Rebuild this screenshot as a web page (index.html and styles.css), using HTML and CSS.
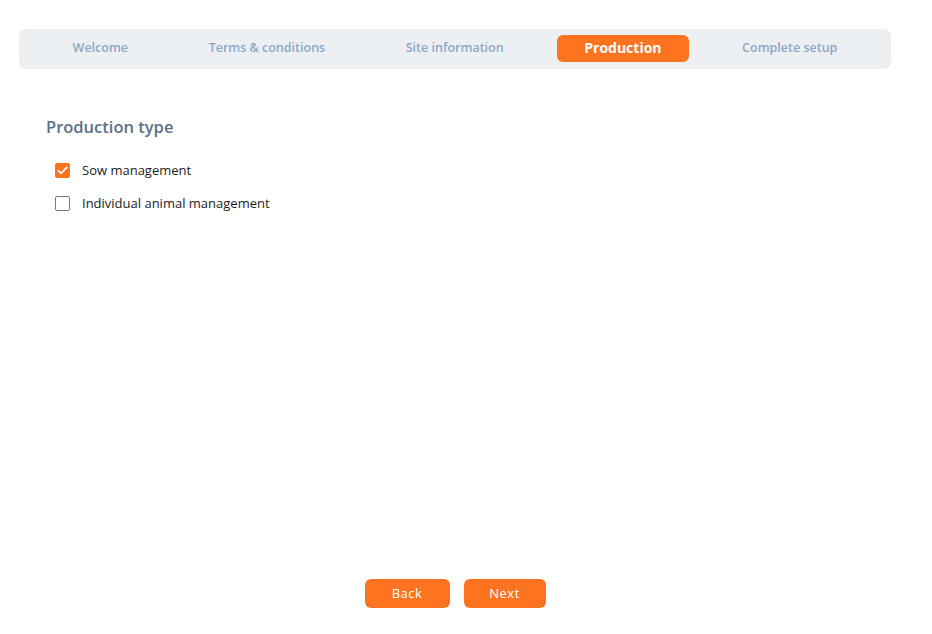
FILE: index.html
```html
<!DOCTYPE html>
<html>
  <head>
    <link rel="stylesheet" href="styles.css">
  </head>
  <body>
    <div class="page">
      <div class="steps">
        <div class="step">Welcome</div>
        <div class="step">Terms &amp; conditions</div>
        <div class="step">Site information</div>
        <div class="step active">Production</div>
        <div class="step">Complete setup</div>
      </div>

      <div class="section">
        <h2 class="title">Production type</h2>
        <label class="option">
          <span class="box checked">
            <svg width="11" height="9" viewBox="0 0 11 9"><path d="M1.2 4.6 L4 7.3 L9.8 1.3" fill="none" stroke="#fff" stroke-width="1.7" stroke-linecap="round" stroke-linejoin="round"/></svg>
          </span>
          Sow management
        </label>
        <label class="option">
          <span class="box"></span>
          Individual animal management
        </label>
      </div>

      <div class="actions">
        <button class="btn back">Back</button>
        <button class="btn">Next</button>
      </div>
    </div>
  </body>
</html>
```

FILE: styles.css
```css
body {
  margin: 0;
  background: #fff;
  font-family: "Open Sans", "Noto Sans", sans-serif;
}

.page {
  width: 872px;
  margin-left: 19px;
  padding-top: 29px;
  height: 605px;
  display: flex;
  flex-direction: column;
}

.steps {
  background: #edf0f3;
  border-radius: 7px;
  height: 40px;
  display: flex;
  align-items: center;
  justify-content: space-evenly;
}
.step {
  font-size: 12.5px;
  font-weight: 600;
  color: #8ea8c6;
  padding: 0 27px 1px 27px;
  height: 26px;
  line-height: 26px;
  border-radius: 6px;
  margin-bottom: 1px;
}
.step.active {
  background: #fd7320;
  color: #fff;
  font-size: 14px;
  font-weight: 700;
}

.section {
  padding: 0 0 0 27px;
  flex: 1;
}
.title {
  margin: 48px 0 0 0;
  font-size: 16.5px;
  font-weight: 600;
  color: #5b6f88;
  line-height: 20px;
}
.option {
  display: flex;
  align-items: center;
  font-size: 13px;
  color: #1c1c1c;
  margin-left: 9px;
  height: 20px;
}
.option:first-of-type {
  margin-top: 23px;
}
.option + .option {
  margin-top: 13px;
}
.box {
  width: 13px;
  height: 13px;
  border: 1px solid #7a7a7a;
  border-radius: 2px;
  margin-right: 12px;
  display: flex;
  align-items: center;
  justify-content: center;
}
.box.checked {
  background: #fd7320;
  border-color: #fd7320;
}

.actions {
  display: flex;
  justify-content: center;
  gap: 14px;
  padding-bottom: 26px;
}
.btn {
  font-family: inherit;
  background: #fd7320;
  color: #fff;
  border: none;
  border-radius: 6px;
  height: 29px;
  width: 82px;
  font-size: 13px;
  font-weight: 500;
  letter-spacing: 0.5px;
  padding: 0 0 2px 0;
}
.btn.back {
  width: 85px;
}
```
